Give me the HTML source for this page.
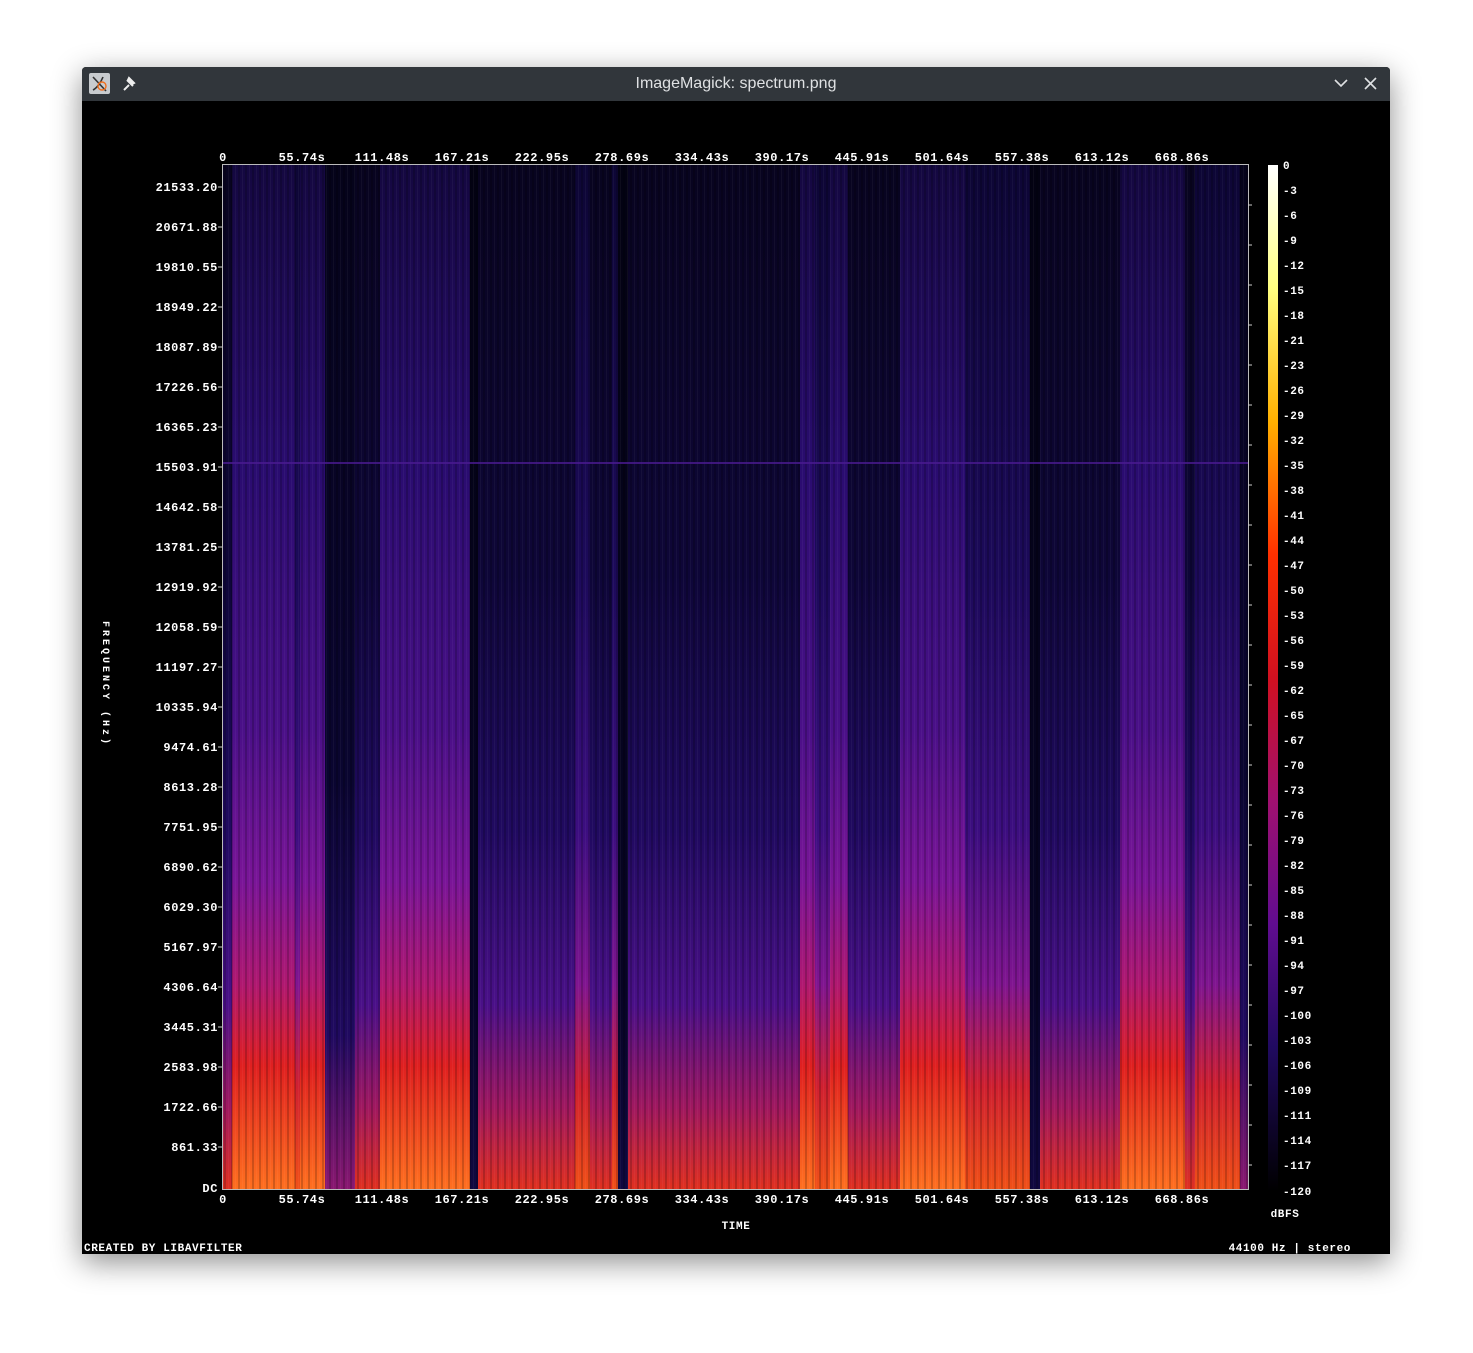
<!DOCTYPE html>
<html><head><meta charset="utf-8"><style>
html,body{margin:0;padding:0;background:#fff;width:1473px;height:1353px;overflow:hidden}
#win{position:absolute;left:82px;top:67px;width:1308px;height:1187px;background:#000;box-shadow:0 8px 30px rgba(0,0,0,0.45);border-radius:4px 4px 0 0;overflow:hidden}
#tb{position:absolute;left:0;top:0;width:1308px;height:34px;background:#31363b;color:#dfe1e3;font:16px "Liberation Sans",sans-serif;text-align:center;line-height:34px}
svg{position:absolute;left:0;top:0}
</style></head><body>
<div id="win"><div id="tb">ImageMagick: spectrum.png</div></div>
<svg width="1473" height="1353" viewBox="0 0 1473 1353">
<defs>
<linearGradient id="L0" x1="0" y1="0" x2="0" y2="1"><stop offset="0" stop-color="#030212"/><stop offset="0.8" stop-color="#070425"/><stop offset="1" stop-color="#100840"/></linearGradient>
<linearGradient id="L1" x1="0" y1="0" x2="0" y2="1"><stop offset="0" stop-color="#05031a"/><stop offset="0.6" stop-color="#0a0530"/><stop offset="0.85" stop-color="#200a60"/><stop offset="1" stop-color="#8a1870"/></linearGradient>
<linearGradient id="L2" x1="0" y1="0" x2="0" y2="1"><stop offset="0" stop-color="#08041f"/><stop offset="0.4" stop-color="#0e0638"/><stop offset="0.65" stop-color="#200a60"/><stop offset="0.82" stop-color="#4a1088"/><stop offset="0.92" stop-color="#a01860"/><stop offset="1" stop-color="#e03020"/></linearGradient>
<linearGradient id="L3" x1="0" y1="0" x2="0" y2="1"><stop offset="0" stop-color="#0d0635"/><stop offset="0.4" stop-color="#1c0a5a"/><stop offset="0.65" stop-color="#3c0e80"/><stop offset="0.8" stop-color="#801590"/><stop offset="0.9" stop-color="#d02030"/><stop offset="1" stop-color="#f05018"/></linearGradient>
<linearGradient id="L4" x1="0" y1="0" x2="0" y2="1"><stop offset="0" stop-color="#140840"/><stop offset="0.3" stop-color="#2a0c70"/><stop offset="0.55" stop-color="#4a1088"/><stop offset="0.7" stop-color="#7a1598"/><stop offset="0.8" stop-color="#b01870"/><stop offset="0.88" stop-color="#e02020"/><stop offset="1" stop-color="#ff7020"/></linearGradient>
<linearGradient id="CB" x1="0" y1="0" x2="0" y2="1"><stop offset="0" stop-color="#ffffff"/><stop offset="0.12" stop-color="#ffff80"/><stop offset="0.25" stop-color="#ffb000"/><stop offset="0.38" stop-color="#ff3000"/><stop offset="0.5" stop-color="#d01020"/><stop offset="0.62" stop-color="#a01070"/><stop offset="0.74" stop-color="#600c90"/><stop offset="0.86" stop-color="#200a60"/><stop offset="1" stop-color="#000000"/></linearGradient>
<pattern id="st" width="7" height="1024" patternUnits="userSpaceOnUse"><rect x="0" y="0" width="2" height="1024" fill="#000" opacity="0.18"/><rect x="4" y="0" width="1" height="1024" fill="#fff" opacity="0.04"/></pattern>
</defs>
<g>
<rect x="222" y="165" width="10" height="1024" fill="url(#L2)"/>
<rect x="232" y="165" width="63" height="1024" fill="url(#L4)"/>
<rect x="295" y="165" width="5" height="1024" fill="url(#L3)"/>
<rect x="300" y="165" width="25" height="1024" fill="url(#L4)"/>
<rect x="325" y="165" width="30" height="1024" fill="url(#L1)"/>
<rect x="355" y="165" width="25" height="1024" fill="url(#L2)"/>
<rect x="380" y="165" width="90" height="1024" fill="url(#L4)"/>
<rect x="470" y="165" width="8" height="1024" fill="url(#L0)"/>
<rect x="478" y="165" width="97" height="1024" fill="url(#L2)"/>
<rect x="575" y="165" width="15" height="1024" fill="url(#L3)"/>
<rect x="590" y="165" width="22" height="1024" fill="url(#L2)"/>
<rect x="612" y="165" width="6" height="1024" fill="url(#L3)"/>
<rect x="618" y="165" width="10" height="1024" fill="url(#L0)"/>
<rect x="628" y="165" width="172" height="1024" fill="url(#L2)"/>
<rect x="800" y="165" width="15" height="1024" fill="url(#L4)"/>
<rect x="815" y="165" width="15" height="1024" fill="url(#L3)"/>
<rect x="830" y="165" width="18" height="1024" fill="url(#L4)"/>
<rect x="848" y="165" width="52" height="1024" fill="url(#L2)"/>
<rect x="900" y="165" width="65" height="1024" fill="url(#L4)"/>
<rect x="965" y="165" width="65" height="1024" fill="url(#L3)"/>
<rect x="1030" y="165" width="10" height="1024" fill="url(#L0)"/>
<rect x="1040" y="165" width="80" height="1024" fill="url(#L2)"/>
<rect x="1120" y="165" width="65" height="1024" fill="url(#L4)"/>
<rect x="1185" y="165" width="10" height="1024" fill="url(#L2)"/>
<rect x="1195" y="165" width="45" height="1024" fill="url(#L3)"/>
<rect x="1240" y="165" width="8" height="1024" fill="url(#L1)"/>
<rect x="222" y="165" width="1026" height="1024" fill="url(#st)"/>
<rect x="222" y="462" width="1026" height="2" fill="#4a1a90" opacity="0.8"/>
<rect x="222.5" y="164.5" width="1026" height="1025" fill="none" stroke="#bbb" stroke-width="1"/>
<rect x="1268" y="165" width="10" height="1026" fill="url(#CB)"/>
</g>
<g font-family="Liberation Mono, monospace" font-weight="bold" font-size="12" fill="#fff" letter-spacing="0.6">
<g text-anchor="end">
<text x="218" y="191">21533.20</text><text x="218" y="231">20671.88</text><text x="218" y="271">19810.55</text><text x="218" y="311">18949.22</text><text x="218" y="351">18087.89</text><text x="218" y="391">17226.56</text><text x="218" y="431">16365.23</text><text x="218" y="471">15503.91</text><text x="218" y="511">14642.58</text><text x="218" y="551">13781.25</text><text x="218" y="591">12919.92</text><text x="218" y="631">12058.59</text><text x="218" y="671">11197.27</text><text x="218" y="711">10335.94</text><text x="218" y="751">9474.61</text><text x="218" y="791">8613.28</text><text x="218" y="831">7751.95</text><text x="218" y="871">6890.62</text><text x="218" y="911">6029.30</text><text x="218" y="951">5167.97</text><text x="218" y="991">4306.64</text><text x="218" y="1031">3445.31</text><text x="218" y="1071">2583.98</text><text x="218" y="1111">1722.66</text><text x="218" y="1151">861.33</text><text x="218" y="1192">DC</text>
</g>
<g text-anchor="middle">
<text x="223" y="161">0</text><text x="302" y="161">55.74s</text><text x="382" y="161">111.48s</text><text x="462" y="161">167.21s</text><text x="542" y="161">222.95s</text><text x="622" y="161">278.69s</text><text x="702" y="161">334.43s</text><text x="782" y="161">390.17s</text><text x="862" y="161">445.91s</text><text x="942" y="161">501.64s</text><text x="1022" y="161">557.38s</text><text x="1102" y="161">613.12s</text><text x="1182" y="161">668.86s</text>
<text x="223" y="1203">0</text><text x="302" y="1203">55.74s</text><text x="382" y="1203">111.48s</text><text x="462" y="1203">167.21s</text><text x="542" y="1203">222.95s</text><text x="622" y="1203">278.69s</text><text x="702" y="1203">334.43s</text><text x="782" y="1203">390.17s</text><text x="862" y="1203">445.91s</text><text x="942" y="1203">501.64s</text><text x="1022" y="1203">557.38s</text><text x="1102" y="1203">613.12s</text><text x="1182" y="1203">668.86s</text>
<text x="736" y="1229" font-size="11">TIME</text>
<text x="1285" y="1217" font-size="11">dBFS</text>
</g>
<g font-size="11">
<text x="1283" y="169">0</text><text x="1283" y="194">-3</text><text x="1283" y="219">-6</text><text x="1283" y="244">-9</text><text x="1283" y="269">-12</text><text x="1283" y="294">-15</text><text x="1283" y="319">-18</text><text x="1283" y="344">-21</text><text x="1283" y="369">-23</text><text x="1283" y="394">-26</text><text x="1283" y="419">-29</text><text x="1283" y="444">-32</text><text x="1283" y="469">-35</text><text x="1283" y="494">-38</text><text x="1283" y="519">-41</text><text x="1283" y="544">-44</text><text x="1283" y="569">-47</text><text x="1283" y="594">-50</text><text x="1283" y="619">-53</text><text x="1283" y="644">-56</text><text x="1283" y="669">-59</text><text x="1283" y="694">-62</text><text x="1283" y="719">-65</text><text x="1283" y="744">-67</text><text x="1283" y="769">-70</text><text x="1283" y="794">-73</text><text x="1283" y="819">-76</text><text x="1283" y="844">-79</text><text x="1283" y="869">-82</text><text x="1283" y="894">-85</text><text x="1283" y="919">-88</text><text x="1283" y="944">-91</text><text x="1283" y="969">-94</text><text x="1283" y="994">-97</text><text x="1283" y="1019">-100</text><text x="1283" y="1044">-103</text><text x="1283" y="1069">-106</text><text x="1283" y="1094">-109</text><text x="1283" y="1119">-111</text><text x="1283" y="1144">-114</text><text x="1283" y="1169">-117</text><text x="1283" y="1195">-120</text>
<text x="84" y="1251">CREATED BY LIBAVFILTER</text>
<text x="1351" y="1251" text-anchor="end">44100 Hz | stereo</text>
<text transform="translate(103,621) rotate(90)" font-size="10" letter-spacing="3">FREQUENCY (Hz)</text>
</g>
</g>
<g stroke="#ccc" stroke-width="1">
<path d="M218 187h4M218 227h4M218 267h4M218 307h4M218 347h4M218 387h4M218 427h4M218 467h4M218 507h4M218 547h4M218 587h4M218 627h4M218 667h4M218 707h4M218 747h4M218 787h4M218 827h4M218 867h4M218 907h4M218 947h4M218 987h4M218 1027h4M218 1067h4M218 1107h4M218 1147h4"/>
<path d="M1248 205h4M1248 245h4M1248 285h4M1248 325h4M1248 365h4M1248 405h4M1248 445h4M1248 485h4M1248 525h4M1248 565h4M1248 605h4M1248 645h4M1248 685h4M1248 725h4M1248 765h4M1248 805h4M1248 845h4M1248 885h4M1248 925h4M1248 965h4M1248 1005h4M1248 1045h4M1248 1085h4M1248 1125h4M1248 1165h4"/>
</g>
<rect x="89" y="73" width="21" height="21" rx="2" fill="#c8cbce"/>
<path d="M93 77l13 14M93 90c4-2 8-8 10-13" stroke="#333" stroke-width="1.6" fill="none"/>
<circle cx="102" cy="86" r="4" fill="none" stroke="#f07020" stroke-width="1.4"/>
<path d="M124 90l5-5M127 80l6 6M129 78l5 5-2 1-4-4z" stroke="#eee" stroke-width="2" fill="#eee"/>
<path d="M1335 80l6 6 6-6" stroke="#dfe1e3" stroke-width="1.6" fill="none"/>
<path d="M1365 78l11 11M1376 78l-11 11" stroke="#dfe1e3" stroke-width="1.6" fill="none"/>
</svg>
</body></html>
